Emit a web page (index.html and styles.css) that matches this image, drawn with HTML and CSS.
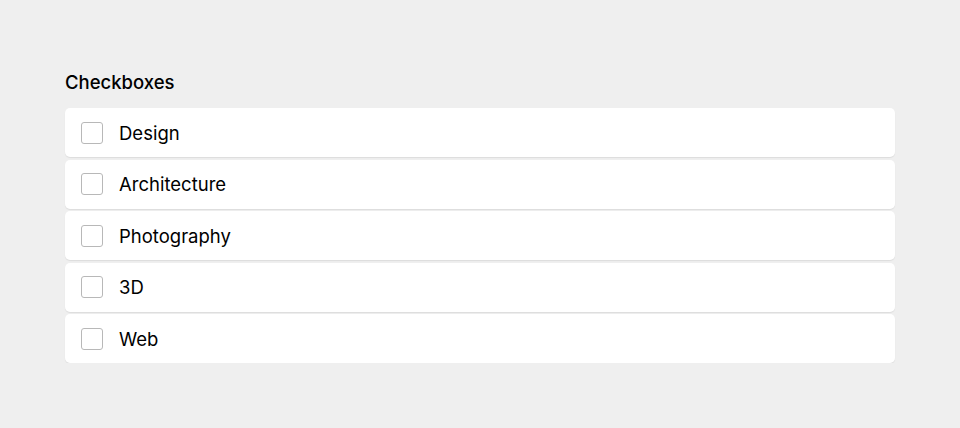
FILE: index.html
```html
<!DOCTYPE html>
<html lang="en">
<head>
  <meta charset="UTF-8">
  <meta name="viewport" content="width=device-width, initial-scale=1.0">
  <title>Checkboxes</title>
  <link rel="stylesheet" href="styles.css">
</head>
<body>
  <div class="container">
    <h2>Checkboxes</h2>
    <div class="list">
      <label class="item"><span class="box"></span><span class="text">Design</span></label>
      <label class="item"><span class="box"></span><span class="text">Architecture</span></label>
      <label class="item"><span class="box"></span><span class="text">Photography</span></label>
      <label class="item"><span class="box"></span><span class="text">3D</span></label>
      <label class="item"><span class="box"></span><span class="text">Web</span></label>
    </div>
  </div>
</body>
</html>
```

FILE: styles.css
```css
body {
  margin: 0;
  background-color: #efefef;
  font-family: Inter, "Liberation Sans", sans-serif;
  color: #000;
}

.container {
  padding: 70px 65px 0 65px;
}

h2 {
  margin: 0 0 14px 0;
  font-size: 18.5px;
  font-weight: 500;
  line-height: 24px;
}

.list {
  display: flex;
  flex-direction: column;
  gap: 2.5px;
}

.item {
  display: flex;
  align-items: center;
  height: 49px;
  padding: 0 16px;
  background-color: #fff;
  border-radius: 5px;
  box-shadow: 0 1px 1px rgba(0, 0, 0, 0.08);
  cursor: pointer;
}

.box {
  width: 20px;
  height: 20px;
  border: 1px solid #b8b8b8;
  border-radius: 3px;
  margin-right: 16px;
}

.text {
  font-size: 18.5px;
  line-height: 24px;
}
```
